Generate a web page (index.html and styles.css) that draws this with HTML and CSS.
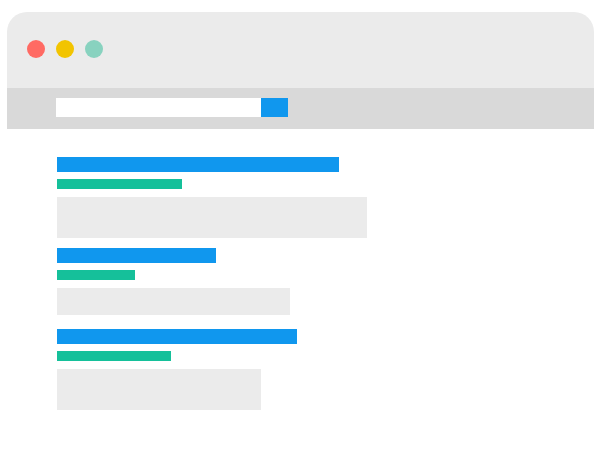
FILE: index.html
```html
<!DOCTYPE html>
<html>
<head>
<meta charset="utf-8">
<link rel="stylesheet" href="styles.css">
</head>
<body>
<div class="window">
  <div class="titlebar">
    <span class="dot dot-red"></span>
    <span class="dot dot-yellow"></span>
    <span class="dot dot-teal"></span>
  </div>
  <div class="toolbar">
    <div class="search"></div>
    <div class="search-btn"></div>
  </div>
  <div class="results">
    <div class="result">
      <div class="title-bar" style="width:282px"></div>
      <div class="url-bar" style="width:125px"></div>
      <div class="snippet snippet-tall" style="width:310px"></div>
    </div>
    <div class="result result-2">
      <div class="title-bar" style="width:159px"></div>
      <div class="url-bar" style="width:78px"></div>
      <div class="snippet snippet-short" style="width:233px"></div>
    </div>
    <div class="result result-3">
      <div class="title-bar" style="width:240px"></div>
      <div class="url-bar" style="width:114px"></div>
      <div class="snippet snippet-tall" style="width:204px"></div>
    </div>
  </div>
</div>
</body>
</html>
```
FILE: styles.css
```css
html, body {
  margin: 0;
  padding: 0;
  background: #ffffff;
}
.window {
  margin: 12px 0 0 7px;
  width: 587px;
}
.titlebar {
  height: 76px;
  background: #ebebeb;
  border-radius: 20px 20px 0 0;
  display: flex;
  align-items: center;
  padding-left: 20px;
  gap: 11px;
  box-sizing: border-box;
  padding-bottom: 2px;
}
.dot {
  width: 18px;
  height: 18px;
  border-radius: 50%;
  display: block;
}
.dot-red { background: #ff6a63; }
.dot-yellow { background: #f2c400; }
.dot-teal { background: #88d2bf; }
.toolbar {
  height: 41px;
  background: #d9d9d9;
  display: flex;
  align-items: flex-start;
  padding: 10px 0 0 49px;
  box-sizing: border-box;
}
.search {
  width: 205px;
  height: 19px;
  background: #ffffff;
}
.search-btn {
  width: 27px;
  height: 19px;
  background: #1097ee;
}
.results {
  padding: 28px 0 0 50px;
  display: flex;
  flex-direction: column;
}
.result {
  display: flex;
  flex-direction: column;
}
.result-2 { margin-top: 10px; }
.result-3 { margin-top: 14px; }
.title-bar {
  height: 15px;
  background: #1097ee;
}
.url-bar {
  height: 10px;
  margin-top: 7px;
  background: #15c09a;
}
.snippet {
  margin-top: 8px;
  background: #ebebeb;
}
.snippet-tall { height: 41px; }
.snippet-short { height: 27px; }
```
